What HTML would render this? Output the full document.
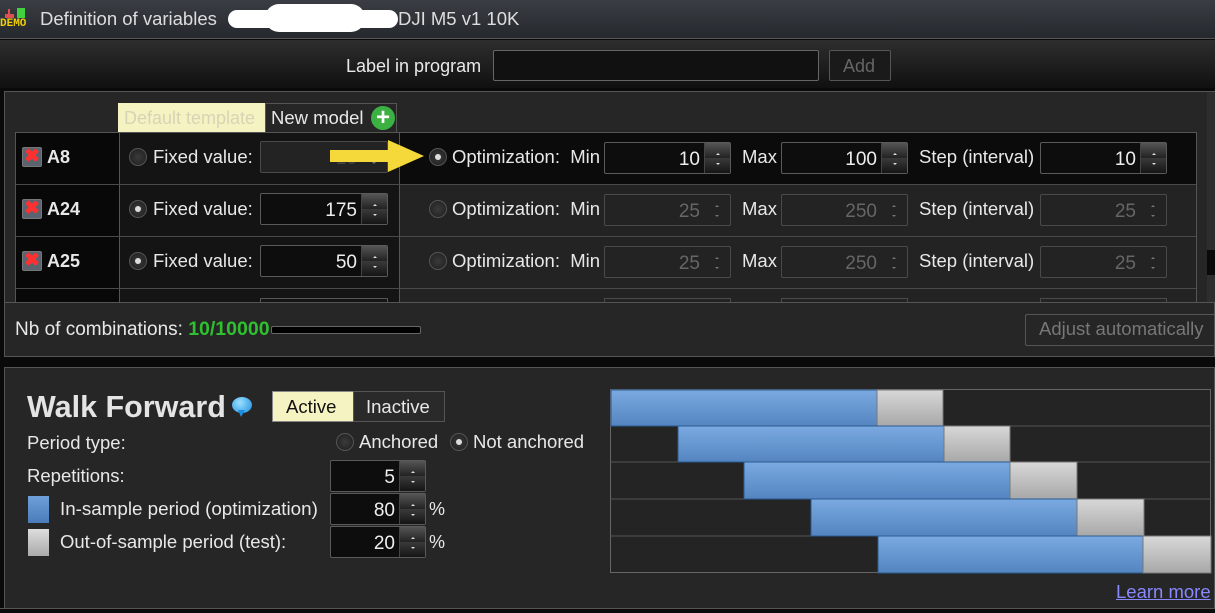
<!DOCTYPE html>
<html><head><meta charset="utf-8"><style>
*{margin:0;padding:0;box-sizing:border-box}
body{width:1215px;height:613px;background:#0a0a0a;font-family:"Liberation Sans",Arial,sans-serif;color:#e8e8e8;position:relative;overflow:hidden;font-size:18px}
.a{position:absolute}
.t{position:absolute;white-space:nowrap;line-height:1}
.sp{position:absolute;border:1px solid #5a5a5a;border-radius:2px;background:#0d0d0d;height:32px}
.sp .v{position:absolute;right:30px;top:6px;font-size:19px;color:#eee}
.sp .b{position:absolute;right:0;top:0;width:26px;height:30px;border-left:1px solid #444;background:linear-gradient(#555,#222 50%,#3a3a3a 50%,#151515)}
.sp .b:before{content:"";position:absolute;left:11px;top:8px;border:2px solid transparent;border-bottom:2px solid #ddd}
.sp .b:after{content:"";position:absolute;left:11px;top:20px;border:2px solid transparent;border-top:2px solid #ddd}
.sp.d{background:#232323;border-color:#4a4a4a}
.sp.d .v{color:#666}
.sp.d .b{background:none;border-left:none}
.sp.d .b:before{border-bottom-color:#777}.sp.d .b:after{border-top-color:#777}
.rad{position:absolute;width:18px;height:18px;border-radius:50%;background:radial-gradient(#3a3a3a,#1e1e1e);border:1px solid #555}
.rad.on:after{content:"";position:absolute;left:5px;top:5px;width:6px;height:6px;border-radius:50%;background:#ddd}
.x{position:absolute;width:20px;height:20px;background:#5a6470;border:1px solid #777;border-radius:2px;color:#ff3030;font-weight:bold;font-size:19px;line-height:18px;text-align:center}
</style></head><body>
<div class="a" style="left:0;top:0;width:1215px;height:39px;background:linear-gradient(#3a3e44,#25292e);border-bottom:1px solid #555"></div>
<div class="a" style="left:5px;top:14px;width:9px;height:4px;background:#e05050"></div>
<div class="a" style="left:8px;top:9px;width:2px;height:6px;background:#e05050"></div>
<div class="a" style="left:17px;top:8px;width:8px;height:10px;background:#40d040"></div>
<div class="t" style="left:0;top:19px;font-size:11px;color:#f0d000;font-family:'Liberation Mono',monospace;font-weight:bold">DEMO</div>
<div class="t" style="left:40px;top:10px;font-size:18.5px;color:#ddd">Definition of variables</div>
<div class="a" style="left:228px;top:10px;width:170px;height:18px;background:#fff;border-radius:9px"></div>
<div class="a" style="left:265px;top:4px;width:100px;height:28px;background:#fff;border-radius:14px"></div>
<div class="t" style="left:398px;top:10px;font-size:18.5px;color:#ddd">DJI M5 v1 10K</div>
<div class="a" style="left:0;top:40px;width:1215px;height:48px;background:linear-gradient(#2e2e2e,#101010)"></div>
<div class="t" style="left:346px;top:57px;font-size:18px">Label in program</div>
<div class="a" style="left:493px;top:50px;width:326px;height:31px;background:#111;border:1px solid #666;border-radius:2px"></div>
<div class="a" style="left:829px;top:50px;width:62px;height:31px;border:1px solid #555;border-radius:2px;background:#1a1a1a"></div>
<div class="t" style="left:843px;top:57px;font-size:18px;color:#666">Add</div>
<div class="a" style="left:4px;top:91px;width:1211px;height:266px;background:#262626;border:1px solid #555"></div>
<div class="a" style="left:118px;top:103px;width:147px;height:29px;background:#f6f3c2"></div>
<div class="t" style="left:124px;top:109px;font-size:18px;color:#d6d4b6">Default template</div>
<div class="a" style="left:265px;top:103px;width:132px;height:29px;border:1px solid #555;border-bottom:none"></div>
<div class="t" style="left:271px;top:109px;font-size:18.5px">New model</div>
<div class="a" style="left:371px;top:106px;width:24px;height:24px;border-radius:50%;background:#3cb043;color:#fff;font-weight:bold;font-size:24px;line-height:23px;text-align:center">+</div>
<div class="a" style="left:15px;top:132px;width:1182px;height:170px;background:#232323;border-left:1px solid #555;border-right:1px solid #555;border-top:1px solid #555;overflow:hidden">
  <div class="a" style="left:0;top:0;width:103px;height:170px;background:#080808"></div>
  <div class="a" style="left:103px;top:0;width:281px;height:170px;background:#141414;border-left:1px solid #555;border-right:1px solid #555"></div>
  <div class="a" style="left:384px;top:0;width:800px;height:51px;background:#0b0b0b"></div>
  <div class="a" style="left:0;top:51px;width:1182px;height:1px;background:#4a4a4a"></div>
  <div class="a" style="left:0;top:103px;width:1182px;height:1px;background:#4a4a4a"></div>
  <div class="a" style="left:0;top:155px;width:1182px;height:1px;background:#4a4a4a"></div>
</div>
<div class="a" style="left:1207px;top:92px;width:8px;height:210px;background:#2e2e2e"></div>
<div class="a" style="left:1207px;top:250px;width:8px;height:25px;background:#0a0a0a"></div>
<div class="x" style="left:22px;top:147px">✖</div><div class="t" style="left:47px;top:148px;font-weight:bold">A8</div>
<div class="rad" style="left:129px;top:148px"></div><div class="t" style="left:153px;top:148px;font-size:18.5px">Fixed value:</div>
<div class="sp d" style="left:260px;top:141px;width:128px"><span class="v" style="color:#444">10</span><span class="b"></span></div>
<div class="rad on" style="left:429px;top:148px"></div><div class="t" style="left:452px;top:148px;font-size:18.5px">Optimization:&nbsp; Min</div>
<div class="sp" style="left:604px;top:142px;width:127px"><span class="v">10</span><span class="b"></span></div>
<div class="t" style="left:742px;top:148px;font-size:18.5px">Max</div>
<div class="sp" style="left:781px;top:142px;width:127px"><span class="v">100</span><span class="b"></span></div>
<div class="t" style="left:919px;top:148px;font-size:18.5px">Step (interval)</div>
<div class="sp" style="left:1040px;top:142px;width:127px"><span class="v">10</span><span class="b"></span></div>
<svg class="a" style="left:328px;top:138px" width="100" height="40"><polygon points="2,12 60,12 60,2 96,18 60,34 60,24 2,24" fill="#f5d83a"/></svg>
<div class="x" style="left:22px;top:199px">✖</div><div class="t" style="left:47px;top:200px;font-weight:bold">A24</div>
<div class="rad on" style="left:129px;top:200px"></div><div class="t" style="left:153px;top:200px;font-size:18.5px">Fixed value:</div>
<div class="sp" style="left:260px;top:193px;width:128px"><span class="v">175</span><span class="b"></span></div>
<div class="rad" style="left:429px;top:200px"></div><div class="t" style="left:452px;top:200px;font-size:18.5px">Optimization:&nbsp; Min</div>
<div class="sp d" style="left:604px;top:194px;width:127px"><span class="v">25</span><span class="b"></span></div>
<div class="t" style="left:742px;top:200px;font-size:18.5px">Max</div>
<div class="sp d" style="left:781px;top:194px;width:127px"><span class="v">250</span><span class="b"></span></div>
<div class="t" style="left:919px;top:200px;font-size:18.5px">Step (interval)</div>
<div class="sp d" style="left:1040px;top:194px;width:127px"><span class="v">25</span><span class="b"></span></div>
<div class="x" style="left:22px;top:251px">✖</div><div class="t" style="left:47px;top:252px;font-weight:bold">A25</div>
<div class="rad on" style="left:129px;top:252px"></div><div class="t" style="left:153px;top:252px;font-size:18.5px">Fixed value:</div>
<div class="sp" style="left:260px;top:245px;width:128px"><span class="v">50</span><span class="b"></span></div>
<div class="rad" style="left:429px;top:252px"></div><div class="t" style="left:452px;top:252px;font-size:18.5px">Optimization:&nbsp; Min</div>
<div class="sp d" style="left:604px;top:246px;width:127px"><span class="v">25</span><span class="b"></span></div>
<div class="t" style="left:742px;top:252px;font-size:18.5px">Max</div>
<div class="sp d" style="left:781px;top:246px;width:127px"><span class="v">250</span><span class="b"></span></div>
<div class="t" style="left:919px;top:252px;font-size:18.5px">Step (interval)</div>
<div class="sp d" style="left:1040px;top:246px;width:127px"><span class="v">25</span><span class="b"></span></div>
<div class="a" style="left:260px;top:298px;width:128px;height:4px;border:1px solid #555;border-bottom:none"></div>
<div class="a" style="left:604px;top:298px;width:127px;height:4px;border:1px solid #4a4a4a;border-bottom:none"></div>
<div class="a" style="left:781px;top:298px;width:127px;height:4px;border:1px solid #4a4a4a;border-bottom:none"></div>
<div class="a" style="left:1040px;top:298px;width:127px;height:4px;border:1px solid #4a4a4a;border-bottom:none"></div>
<div class="a" style="left:5px;top:302px;width:1210px;height:1px;background:#555"></div>
<div class="t" style="left:15px;top:320px;font-size:19px">Nb of combinations: <b style="color:#2fc02f;font-size:19.5px">10/10000</b></div>
<div class="a" style="left:271px;top:326px;width:150px;height:8px;background:#000;border:1px solid #666;border-radius:2px"></div>
<div class="a" style="left:1025px;top:314px;width:195px;height:32px;border:1px solid #555;border-radius:2px"></div>
<div class="t" style="left:1039px;top:320px;color:#777;font-size:18.5px">Adjust automatically</div>
<div class="a" style="left:4px;top:367px;width:1211px;height:246px;background:#262626;border:1px solid #555;border-bottom:none"></div>
<div class="t" style="left:27px;top:392px;font-size:30.5px;font-weight:bold;color:#e4e4e4">Walk Forward</div>
<div class="a" style="left:232px;top:397px;width:20px;height:16px;border-radius:50%;background:radial-gradient(circle at 40% 35%,#9de0ff,#1a8ee0)"></div>
<div class="a" style="left:238px;top:410px;width:0;height:0;border-left:3px solid transparent;border-right:4px solid transparent;border-top:7px solid #1a8ee0"></div>
<div class="a" style="left:272px;top:391px;width:82px;height:31px;background:#f6f3c2;border:1px solid #888"></div>
<div class="t" style="left:286px;top:398px;color:#111;font-size:18.5px">Active</div>
<div class="a" style="left:353px;top:391px;width:92px;height:31px;background:#2a2a2a;border:1px solid #555"></div>
<div class="t" style="left:366px;top:398px;font-size:18.5px">Inactive</div>
<div class="t" style="left:27px;top:434px;font-size:18.5px">Period type:</div>
<div class="rad" style="left:336px;top:433px"></div><div class="t" style="left:359px;top:433px;font-size:18.5px">Anchored</div>
<div class="rad on" style="left:450px;top:433px"></div><div class="t" style="left:473px;top:433px;font-size:18.5px">Not anchored</div>
<div class="t" style="left:27px;top:467px;font-size:18.5px">Repetitions:</div>
<div class="sp" style="left:330px;top:460px;width:96px"><span class="v">5</span><span class="b"></span></div>
<div class="a" style="left:28px;top:496px;width:21px;height:27px;background:linear-gradient(#6e9fd8,#4a7cbc)"></div>
<div class="t" style="left:60px;top:500px;font-size:18.8px">In-sample period (optimization)</div>
<div class="sp" style="left:330px;top:493px;width:96px"><span class="v">80</span><span class="b"></span></div>
<div class="t" style="left:429px;top:500px">%</div>
<div class="a" style="left:28px;top:529px;width:21px;height:27px;background:linear-gradient(#ddd,#aaa)"></div>
<div class="t" style="left:60px;top:533px;font-size:18.5px">Out-of-sample period (test):</div>
<div class="sp" style="left:330px;top:526px;width:96px"><span class="v">20</span><span class="b"></span></div>
<div class="t" style="left:429px;top:533px">%</div>
<svg class="a" style="left:610px;top:389px" width="603" height="186">
<defs><linearGradient id="bl" x1="0" y1="0" x2="0" y2="1"><stop offset="0" stop-color="#7aaae0"/><stop offset="1" stop-color="#5585c0"/></linearGradient>
<linearGradient id="gr" x1="0" y1="0" x2="0" y2="1"><stop offset="0" stop-color="#d8d8d8"/><stop offset="1" stop-color="#a8a8a8"/></linearGradient></defs>
<rect x="0.5" y="0.5" width="600" height="183" fill="#242424" stroke="#666"/>
<g stroke="#555"><line x1="0" y1="37" x2="601" y2="37"/><line x1="0" y1="73" x2="601" y2="73"/><line x1="0" y1="110" x2="601" y2="110"/><line x1="0" y1="147" x2="601" y2="147"/></g>
<g stroke="#2a5a90">
<rect x="1" y="1" width="266" height="36" fill="url(#bl)"/><rect x="267" y="1" width="66" height="36" fill="url(#gr)" stroke="#777"/>
<rect x="68" y="37" width="266" height="36" fill="url(#bl)"/><rect x="334" y="37" width="66" height="36" fill="url(#gr)" stroke="#777"/>
<rect x="134" y="73" width="266" height="37" fill="url(#bl)"/><rect x="400" y="73" width="67" height="37" fill="url(#gr)" stroke="#777"/>
<rect x="201" y="110" width="266" height="37" fill="url(#bl)"/><rect x="467" y="110" width="67" height="37" fill="url(#gr)" stroke="#777"/>
<rect x="268" y="147" width="265" height="37" fill="url(#bl)"/><rect x="533" y="147" width="68" height="37" fill="url(#gr)" stroke="#777"/>
</g></svg>
<div class="t" style="left:1116px;top:583px;color:#8888ff;text-decoration:underline;font-size:18.5px">Learn more</div>
<div class="a" style="left:0;top:608px;width:1215px;height:5px;background:#0a0a0a;border-top:1px solid #555"></div>
</body></html>
